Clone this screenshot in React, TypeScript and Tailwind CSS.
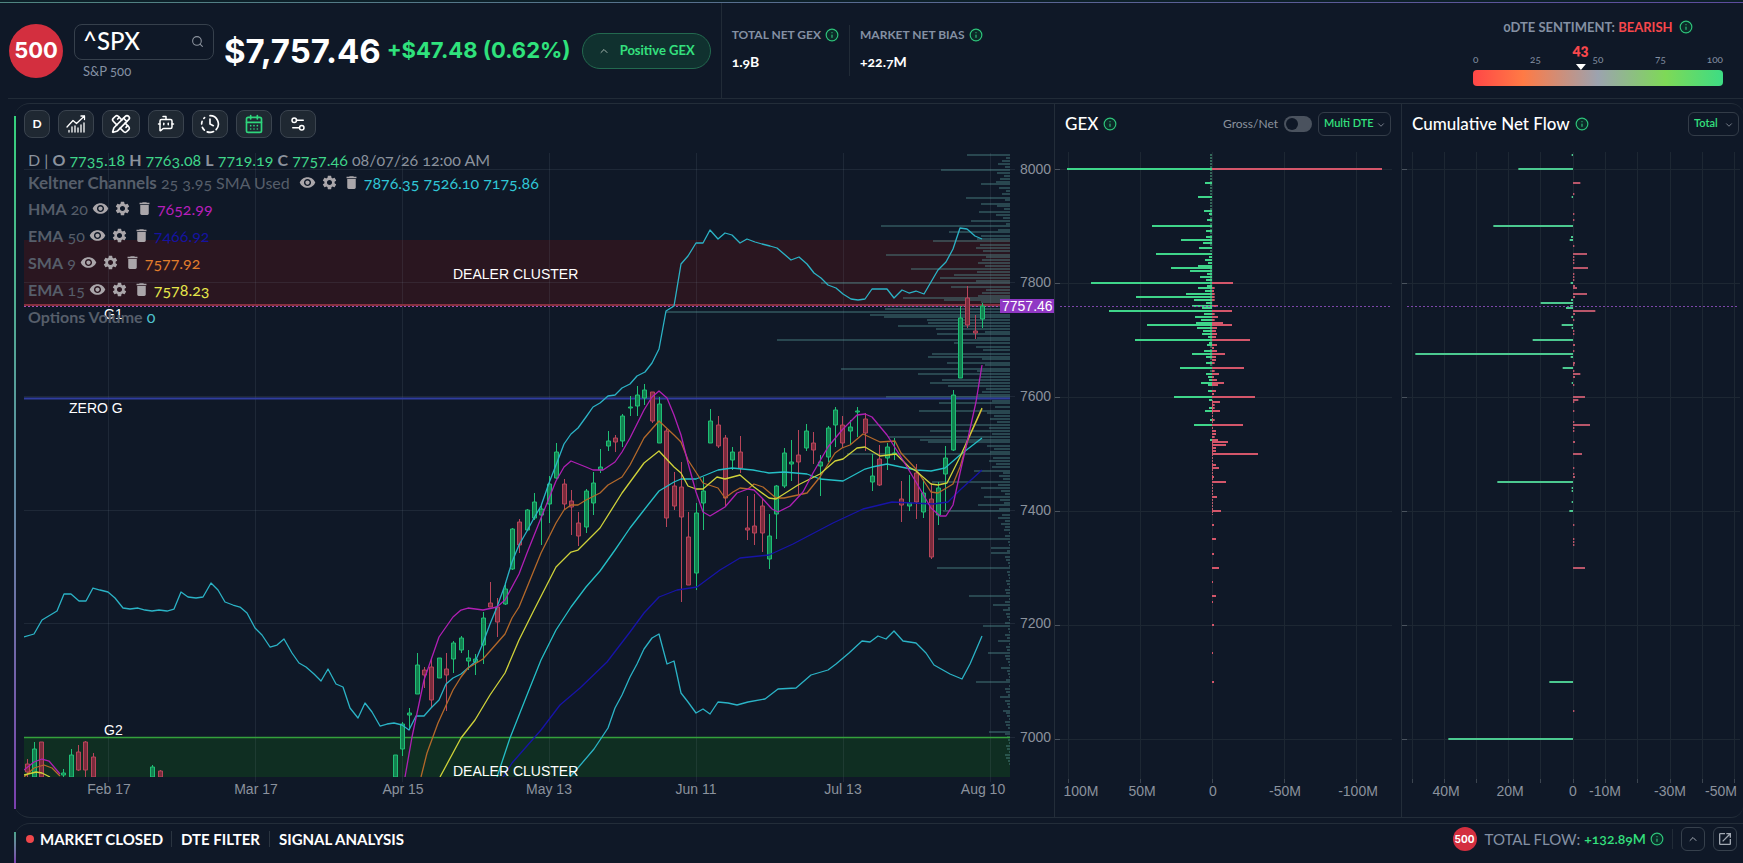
import { useState, type ReactNode } from 'react';
import {
  BotMessageSquare,
  CalendarDays,
  ChevronDown,
  ChevronUp,
  ClockFading,
  Info,
  PencilRuler,
  Search,
  Settings2,
} from 'lucide-react';
import { MdDelete, MdOpenInNew, MdSettings, MdVisibility } from 'react-icons/md';

// ---------- chart data ----------

// x, high, body top, body bottom, low, up(1) / down(0)
const candles = [
  [27, 759, 764, 772, 777, 0], [34, 742, 749, 777, 777, 1], [41, 742, 742, 777, 777, 0],
  [63, 769, 773, 775, 777, 1], [71, 749, 755, 777, 777, 1], [78, 745, 752, 770, 771, 0],
  [85, 741, 742, 770, 777, 0], [93, 753, 757, 777, 777, 0], [152, 765, 767, 777, 777, 1],
  [160, 770, 771, 777, 777, 0], [395, 755, 755, 777, 777, 1], [402, 722, 724, 749, 756, 1],
  [409, 708, 713, 715, 730, 1], [417, 653, 665, 694, 694, 1], [424, 667, 670, 675, 688, 0],
  [431, 659, 667, 700, 707, 0], [439, 658, 658, 678, 678, 1], [446, 653, 669, 675, 711, 0],
  [453, 641, 643, 659, 673, 1], [461, 636, 638, 650, 653, 1], [468, 650, 658, 661, 670, 1],
  [475, 654, 659, 662, 675, 1], [483, 612, 618, 645, 664, 1], [490, 582, 603, 607, 607, 0],
  [497, 598, 607, 622, 637, 0], [505, 582, 589, 604, 605, 1], [512, 528, 529, 569, 570, 1],
  [519, 519, 522, 545, 553, 0], [527, 509, 510, 530, 531, 1], [534, 493, 502, 518, 520, 1],
  [541, 504, 509, 515, 545, 1], [549, 476, 484, 504, 523, 1], [556, 443, 452, 478, 479, 1],
  [564, 479, 484, 504, 510, 0], [571, 490, 501, 507, 535, 0], [578, 512, 523, 536, 546, 0],
  [586, 489, 491, 527, 533, 1], [593, 472, 483, 503, 515, 1], [600, 449, 467, 470, 473, 1],
  [608, 431, 441, 446, 451, 1], [615, 435, 438, 442, 452, 0], [622, 414, 416, 441, 447, 1],
  [630, 396, 407, 408, 416, 1], [637, 386, 395, 406, 416, 1], [644, 384, 390, 398, 405, 1],
  [652, 392, 392, 421, 423, 0], [659, 397, 404, 443, 443, 1], [666, 429, 431, 518, 527, 0],
  [674, 472, 486, 506, 510, 0], [681, 462, 487, 517, 602, 0], [688, 512, 537, 585, 585, 0],
  [696, 503, 513, 573, 590, 1], [703, 477, 491, 503, 530, 1], [710, 409, 421, 443, 443, 1],
  [718, 416, 425, 446, 448, 0], [725, 435, 438, 498, 507, 0], [732, 447, 452, 460, 470, 1],
  [740, 436, 452, 468, 473, 0], [747, 496, 528, 530, 540, 0], [754, 494, 526, 533, 545, 0],
  [762, 499, 506, 533, 552, 0], [769, 514, 536, 559, 569, 1], [776, 485, 486, 514, 539, 1],
  [784, 448, 453, 486, 488, 1], [791, 440, 462, 464, 481, 1], [798, 430, 455, 462, 494, 0],
  [806, 424, 431, 448, 451, 1], [813, 432, 443, 450, 464, 0], [820, 455, 462, 466, 496, 1],
  [828, 426, 428, 457, 462, 1], [835, 407, 410, 425, 447, 1], [842, 416, 425, 443, 448, 0],
  [850, 420, 427, 431, 444, 1], [857, 407, 411, 412, 437, 1], [865, 413, 419, 433, 451, 0],
  [872, 454, 476, 482, 491, 1], [879, 445, 459, 485, 486, 0], [887, 443, 447, 458, 470, 1],
  [894, 438, 453, 454, 460, 1], [901, 481, 499, 505, 522, 0], [909, 475, 503, 506, 511, 1],
  [916, 464, 473, 502, 519, 0], [923, 479, 493, 512, 518, 1], [931, 483, 499, 557, 559, 0],
  [938, 482, 488, 515, 525, 1], [945, 446, 458, 474, 510, 1], [953, 390, 395, 450, 451, 1],
  [960, 306, 318, 378, 378, 1], [967, 286, 298, 325, 328, 0], [975, 315, 331, 333, 339, 0],
  [982, 303, 306, 319, 328, 1],
];

const lines = [
  // keltner upper
  { color: '#2bb3c6', points: '24,637 34,634 42,620 57,611 64,594 71,594 79,601 86,601 93,588 100,590 108,592 115,598 123,608 130,609 138,608 145,610 152,611 159,610 167,611 174,609 181,592 188,597 196,598 203,597 211,583 218,590 225,602 233,605 240,607 247,613 255,628 262,635 270,647 277,645 284,639 292,653 299,663 306,667 314,674 321,681 328,669 336,684 343,687 350,708 358,718 365,703 372,712 380,726 387,724 394,723 402,725 409,730 416,716 424,716 431,708 439,700 446,684 453,678 461,674 468,668 475,662 483,643 490,624 497,607 505,585 512,562 519,545 527,531 534,518 541,506 549,483 556,465 564,444 571,434 578,428 586,417 593,407 600,403 608,396 615,395 622,388 630,384 637,376 645,372 652,363 659,349 666,311 674,306 681,264 688,256 696,243 703,243 710,230 718,239 725,233 732,235 740,243 747,239 755,242 762,244 770,246 777,248 784,254 791,260 799,257 807,264 814,273 821,278 828,285 836,288 843,294 851,299 858,300 865,299 872,289 887,289 894,298 902,290 909,293 916,291 924,294 938,270 946,262 953,249 960,228 967,229 975,236 982,239' },
  // keltner middle
  { color: '#25bfc6', points: '497,777 510,738 527,695 541,660 556,630 571,607 586,587 600,571 615,550 630,528 644,510 659,491 674,482 681,479 696,479 718,470 732,468 753,470 769,473 784,472 807,474 820,479 843,481 865,469 872,467 887,464 901,467 916,470 931,471 945,468 960,455 982,438' },
  // keltner lower
  { color: '#2bb3c6', points: '570,777 577,769 594,749 608,728 615,708 622,695 630,677 637,664 644,649 652,638 659,634 667,664 674,661 681,693 688,702 696,713 703,709 710,714 718,702 728,703 737,705 748,702 765,699 778,689 796,688 811,675 828,670 836,664 849,653 862,641 870,642 878,636 886,639 894,631 903,641 916,643 926,653 934,665 950,674 962,679 970,664 982,636' },
  // ema 50
  { color: '#1714a8', points: '503,777 512,763 541,730 560,705 580,688 607,662 630,632 644,613 659,597 677,590 697,587 720,570 740,558 769,555 793,544 833,523 863,509 892,502 933,504 948,502 960,490 982,470' },
  // sma 9
  { color: '#b4692a', points: '421,777 427,753 438,723 453,690 461,677 468,668 483,659 505,634 512,618 519,607 541,553 556,523 564,510 571,505 578,505 586,500 600,493 608,485 622,477 630,465 644,438 659,421 674,435 681,442 688,460 703,483 718,488 725,498 733,492 740,488 748,489 754,484 763,487 776,498 784,498 798,495 807,493 820,477 835,453 842,448 850,445 863,434 880,442 895,441 901,453 916,469 931,492 938,493 953,484 960,467 968,440 982,409' },
  { color: '#b4692a', points: '24,777 34,768 44,765 52,768 60,776' },
  // ema 15
  { color: '#cfd23a', points: '440,777 461,738 475,720 490,695 505,673 519,640 534,610 556,567 571,552 578,550 586,542 600,528 622,493 644,463 659,451 674,467 681,473 688,486 696,489 703,489 717,477 725,479 740,475 754,487 769,498 776,499 798,485 820,474 835,461 843,459 857,448 865,447 880,456 896,454 909,467 916,471 931,484 938,485 947,483 960,457 982,408' },
  { color: '#cfd23a', points: '24,775 36,772 42,773 50,777' },
  // hma 20
  { color: '#b01fb4', points: '405,777 412,737 424,680 431,660 439,637 453,617 461,610 468,608 483,610 497,607 505,600 519,574 527,553 541,518 556,481 564,467 571,461 586,467 593,470 603,470 615,462 622,452 630,438 644,410 652,397 659,391 667,398 674,415 681,435 688,463 696,492 703,512 710,516 725,507 737,493 748,489 754,490 762,498 772,509 778,512 790,506 803,492 813,473 828,447 842,430 857,415 865,414 872,417 887,435 901,457 916,482 931,508 940,516 946,516 953,505 960,473 968,438 976,402 982,365' },
  { color: '#b01fb4', points: '24,770 34,762 42,759 49,761 60,774' },
];

// y, length of the options volume bar
const volume = [
  [154, 43], [169, 69], [183, 29], [197, 44], [203, 29], [211, 31], [220, 39], [225, 129], [231, 61],
  [240, 77], [254, 124], [268, 99], [274, 56], [277, 70], [282, 189], [286, 59], [297, 107], [299, 66],
  [305, 125], [308, 125], [311, 344], [314, 140], [316, 126], [319, 83], [322, 82], [325, 112],
  [328, 74], [333, 73], [339, 233], [342, 56], [353, 78], [356, 82], [362, 63], [368, 169], [373, 92],
  [379, 68], [382, 80], [385, 62], [396, 124], [402, 71], [410, 91], [424, 143], [430, 80], [436, 122],
  [439, 90], [441, 82], [453, 163], [470, 36], [481, 78], [487, 29], [496, 26], [504, 32], [510, 67],
  [538, 72], [547, 19], [552, 19], [567, 73], [595, 41], [604, 17], [609, 7], [625, 27], [640, 12],
  [652, 22], [667, 9], [681, 34], [696, 10], [710, 7], [731, 21],
];

const filler = Array.from({ length: 203 }, (_, i) => {
  const y = 157 + i * 3;
  const noise = (i * 37) % 11;
  let length = 1 + (noise % 5);
  if (y < 235) length = 4 + noise;
  else if (y < 400) length = 24 + noise;
  else if (y < 470) length = 13 + noise;
  else if (y < 530) length = 5 + (noise % 8);
  return [y, length];
});

// rows and lengths of the side charts are kept in thirds of a pixel
const gexPositive = [
  [237, 435], [279, 21], [321, 42], [363, 24], [372, 9], [390, 15], [408, 180], [423, 18], [441, 18],
  [450, 93], [459, 27], [474, 39], [492, 168], [501, 9], [510, 21], [519, 12], [528, 42], [534, 123],
  [543, 66], [552, 15], [561, 36], [570, 18], [579, 363], [588, 15], [594, 42], [603, 21], [612, 78],
  [621, 228], [630, 54], [639, 18], [648, 60], [654, 30], [663, 309], [672, 24], [681, 51], [690, 33],
  [699, 48], [705, 195], [714, 45], [723, 27], [732, 30], [741, 12], [750, 231], [759, 9], [765, 15],
  [783, 24], [792, 60], [801, 18], [819, 18], [834, 96], [852, 18], [861, 12], [870, 9], [879, 33],
  [885, 12], [903, 12], [921, 114], [930, 9], [954, 9], [963, 21], [990, 6], [1005, 54], [1050, 6],
];
const gexNegative = [
  [237, 510], [579, 63], [594, 8], [603, 6], [612, 8], [621, 8], [630, 8], [648, 18], [663, 60],
  [672, 8], [681, 18], [690, 8], [699, 33], [705, 60], [714, 15], [723, 12], [732, 15], [741, 12],
  [750, 114], [765, 15], [774, 6], [783, 15], [792, 39], [801, 12], [810, 12], [819, 8], [834, 96],
  [843, 8], [852, 21], [861, 6], [870, 15], [879, 36], [885, 18], [903, 12], [912, 6], [921, 129],
  [936, 24], [945, 8], [954, 8], [963, 24], [990, 8], [1005, 93], [1023, 12], [1032, 12], [1041, 8],
  [1050, 18], [1056, 48], [1065, 42], [1074, 12], [1083, 12], [1092, 138], [1125, 12], [1134, 21],
  [1160, 6], [1176, 42], [1221, 15], [1263, 27], [1305, 6], [1347, 12], [1392, 6], [1434, 21],
  [1476, 3], [1518, 12], [1536, 3], [1605, 6], [1689, 3], [1776, 6],
];
const flowPositive = [
  [194, 4], [237, 164], [321, 4], [408, 239], [441, 6], [450, 10], [579, 7], [630, 6], [639, 97], [648, 8],
  [654, 21], [681, 5], [705, 34], [714, 4], [750, 121], [792, 473], [801, 7], [834, 31], [879, 4],
  [1176, 227], [1194, 4], [1203, 4], [1236, 4], [1263, 11], [1776, 71], [1947, 374],
];
const flowNegative = [
  [279, 22], [312, 4], [372, 4], [390, 4], [468, 4], [492, 42], [501, 4], [510, 4], [519, 4], [534, 45],
  [552, 4], [561, 4], [570, 4], [588, 6], [594, 12], [612, 42], [621, 6], [663, 67], [672, 6],
  [690, 4], [723, 4], [732, 4], [765, 6], [783, 4], [819, 6], [825, 4], [843, 4], [852, 22], [861, 6],
  [885, 4], [921, 36], [930, 16], [936, 4], [963, 4], [996, 4], [1005, 51], [1014, 4], [1023, 4],
  [1056, 6], [1092, 27], [1134, 4], [1152, 4], [1161, 6], [1305, 4], [1347, 4], [1356, 4], [1365, 4],
  [1434, 36], [1862, 4],
];

const UP = '#1fbf75';
const DOWN = '#b8455a';
const GRID = '#1d2733';
const LABEL = '#8b929d';

const indicators = [
  { name: 'HMA', params: '20', value: '7652.99', color: 'text-[#b61fba]' },
  { name: 'EMA', params: '50', value: '7466.92', color: 'text-[#1613a0]' },
  { name: 'SMA', params: '9', value: '7577.92', color: 'text-[#e07d2c]' },
  { name: 'EMA', params: '15', value: '7578.23', color: 'text-[#e6e64a]' },
];

// ---------- small pieces ----------

function InfoIcon() {
  return <Info className="h-[14px] w-[14px] shrink-0 rounded-full bg-[#0c2a28] text-[#2fc27c]" />;
}

function SpxBadge({ className }: { className: string }) {
  return (
    <span className={`flex shrink-0 items-center justify-center rounded-full bg-[#d32f3f] font-[Inter] font-bold text-white ${className}`}>
      500
    </span>
  );
}

function ToolButton({ label, children, className = 'w-9' }: { label: string; children: ReactNode; className?: string }) {
  return (
    <button
      type="button"
      aria-label={label}
      className={`flex h-7 cursor-pointer items-center justify-center rounded-lg border border-[#3a434e] bg-[#1f2832] text-white ${className}`}
    >
      {children}
    </button>
  );
}

function IndicatorActions({ name }: { name: string }) {
  return (
    <span className="mx-1 flex items-center gap-[5px] text-[#aaa6aa]">
      <button type="button" aria-label={`Hide ${name}`} className="cursor-pointer"><MdVisibility className="h-[17px] w-[17px]" /></button>
      <button type="button" aria-label={`${name} settings`} className="cursor-pointer"><MdSettings className="h-[17px] w-[17px]" /></button>
      <button type="button" aria-label={`Remove ${name}`} className="cursor-pointer"><MdDelete className="h-[17px] w-[17px]" /></button>
    </span>
  );
}

function PickList({ label, value, options, className }: { label: string; value: string; options: string[]; className: string }) {
  return (
    <div className="relative">
      <select
        aria-label={label}
        defaultValue={value}
        className={`block h-6 cursor-pointer appearance-none rounded-md border border-[#333c48] bg-transparent pb-0.5 pl-[5px] text-[11px] leading-5 font-semibold text-[#34e07e] outline-none ${className}`}
      >
        {options.map((option) => <option key={option}>{option}</option>)}
      </select>
      <ChevronDown className="pointer-events-none absolute top-2 right-[5px] h-[10px] w-[10px] text-[#8b929d]" />
    </div>
  );
}

function Bars({ zero, rows, side, color }: { zero: number; rows: number[][]; side: 'left' | 'right'; color: string }) {
  return (
    <g fill={color}>
      {rows.map(([row, length]) => (
        <rect
          key={row}
          x={side === 'left' ? zero - length / 3 : zero}
          y={Math.round(90 + row / 3) - 1}
          width={length / 3}
          height="2"
        />
      ))}
    </g>
  );
}

function SideGrid({ left, right, xs }: { left: number; right: number; xs: number[] }) {
  return (
    <g stroke={GRID} shapeRendering="crispEdges">
      {xs.map((x) => <path key={x} d={`M${x} 152V783`} />)}
      {xs.map((x) => <path key={`t${x}`} d={`M${x} 779V783`} stroke="#3c4550" />)}
      {[169, 283, 397, 511, 625, 739].map((y) => (
        <g key={y}>
          <path d={`M${left} ${y}H${right}`} />
          <path d={`M${left} ${y}h5`} stroke="#4a535e" />
        </g>
      ))}
    </g>
  );
}

// ---------- charts ----------

function PriceChart() {
  const months: [string, number][] = [
    ['Feb 17', 109], ['Mar 17', 256], ['Apr 15', 403], ['May 13', 549], ['Jun 11', 696], ['Jul 13', 843], ['Aug 10', 983],
  ];
  const prices: [string, number][] = [
    ['8000', 169], ['7800', 282], ['7600', 396], ['7400', 510], ['7200', 623], ['7000', 737],
  ];
  return (
    <svg viewBox="14 146 1040 671" className="block w-full font-['Liberation_Sans',sans-serif] text-sm" role="img" aria-label="S&P 500 price chart">
      <defs>
        <clipPath id="plot"><rect x="24" y="146" width="986" height="631" /></clipPath>
      </defs>
      <rect x="24" y="240" width="986" height="65" fill="#2a1620" />
      <rect x="24" y="737" width="986" height="40" fill="#0f2e22" />
      <g stroke="#8899aa" strokeOpacity="0.12" shapeRendering="crispEdges">
        {[108, 255, 402, 549, 696, 843, 990].map((x) => <path key={x} d={`M${x}.5 153V782`} />)}
        {prices.map(([, y]) => <path key={y} d={`M24 ${y}.5H1015`} />)}
      </g>
      <g fill="#5a9a9c" fillOpacity="0.36" shapeRendering="crispEdges" clipPath="url(#plot)">
        {volume.map(([y, length]) => <rect key={y} x={1010 - length} y={y} width={length} height="2" />)}
        {filler
          .filter(([y]) => !volume.some(([v]) => Math.abs(v - y) < 2))
          .map(([y, length]) => <rect key={y} x={1010 - length} y={y} width={length} height="2" />)}
      </g>
      <path d="M24 398.5H1010" stroke="#303d9e" strokeWidth="2" />
      <path d="M24 737.5H1010" stroke="#35a13c" strokeWidth="1.5" />
      <path d="M24 305H1010" stroke="#86303f" strokeWidth="2" />
      <path d="M24 306.5H1000" stroke="#a94fb4" strokeDasharray="2 2" />

      <g fill="none" strokeWidth="1.3" strokeLinejoin="round" clipPath="url(#plot)">
        {candles.map(([x, high, top, bottom, low, up]) => (
          <g key={x} stroke={up ? UP : DOWN} strokeWidth="1">
            <path d={`M${x}.5 ${high}V${top}M${x}.5 ${bottom}V${low}`} />
            <rect x={x - 1.5} y={top} width="4" height={Math.max(bottom - top, 1)} fill={up ? '#12804f' : '#7a2b3c'} />
          </g>
        ))}
        {lines.map(({ color, points }) => <polyline key={points} points={points} stroke={color} />)}
      </g>

      <g fill={LABEL}>
        {months.map(([text, x]) => <text key={text} x={x} y="794" textAnchor="middle">{text}</text>)}
        {prices.map(([text, y]) => <text key={text} x="1020" y={y + 5}>{text}</text>)}
      </g>
      <g fill="#ffffff">
        <text x="453" y="279">DEALER CLUSTER</text>
        <text x="453" y="776">DEALER CLUSTER</text>
        <text x="69" y="413">ZERO G</text>
        <text x="104" y="319">G1</text>
        <text x="104" y="735">G2</text>
      </g>
      <rect x="1000" y="299" width="54" height="14" fill="#9038c4" />
      <text x="1002" y="311" fill="#ffffff">7757.46</text>
    </svg>
  );
}

function GexChart() {
  const ticks: [string, number][] = [['100M', 1081], ['50M', 1142], ['0', 1213], ['-50M', 1285], ['-100M', 1358]];
  return (
    <svg viewBox="1055 146 346 671" className="block w-full font-['Liberation_Sans',sans-serif] text-sm" role="img" aria-label="Gamma exposure by strike">
      <SideGrid left={1055} right={1392} xs={[1068, 1140, 1212, 1284, 1356]} />
      <path d="M1211 154V384" stroke="#58b98e" strokeDasharray="2 1" />
      <path d="M1212.5 400V515" stroke="#b85c6c" strokeDasharray="2 1" />
      <Bars zero={1212} rows={gexPositive} side="left" color="#3fd58a" />
      <Bars zero={1212} rows={gexNegative} side="right" color="#d4566a" />
      <path d="M1060 306.5H1391" stroke="#7b46a8" strokeDasharray="2 2" />
      <g fill={LABEL}>
        {ticks.map(([text, x]) => <text key={text} x={x} y="796" textAnchor="middle">{text}</text>)}
      </g>
    </svg>
  );
}

function FlowChart() {
  const ticks: [string, number][] = [['40M', 1446], ['20M', 1510], ['0', 1573], ['-10M', 1605], ['-30M', 1670], ['-50M', 1721]];
  return (
    <svg viewBox="1402 146 341 671" className="block w-full font-['Liberation_Sans',sans-serif] text-sm" role="img" aria-label="Cumulative net flow by strike">
      <SideGrid left={1402} right={1740} xs={[1412, 1444, 1476, 1508, 1540, 1573, 1605, 1637, 1670, 1702, 1734]} />
      <Bars zero={1573} rows={flowPositive} side="left" color="#4cc990" />
      <Bars zero={1573} rows={flowNegative} side="right" color="#b9566a" />
      <path d="M1407 306.5H1739" stroke="#7b46a8" strokeDasharray="2 2" />
      <g fill={LABEL}>
        {ticks.map(([text, x]) => <text key={text} x={x} y="796" textAnchor="middle">{text}</text>)}
      </g>
    </svg>
  );
}

// ---------- page sections ----------

function Header() {
  return (
    <header className="ml-2 flex h-24 items-stretch border-b border-[#212b37]">
      <div className="flex items-center pr-[10px] pl-px">
        <SpxBadge className="h-[54px] w-[54px] text-[22px]" />
        <div className="ml-[11px] flex w-[140px] flex-col gap-0.5 pt-0.5">
          <div className="relative">
            <input
              aria-label="Symbol"
              defaultValue="^SPX"
              className="block h-9 w-full rounded-lg border border-[#36404c] bg-transparent pr-8 pb-0.5 pl-2 text-2xl leading-7 font-medium text-white outline-none"
            />
            <Search className="pointer-events-none absolute top-[11px] right-[10px] h-[13px] w-[13px] text-[#8b929d]" />
          </div>
          <span className="pl-[9px] text-[13px] leading-[18px] text-[#8490a3]">S&P 500</span>
        </div>
        <span className="ml-[10px] font-[Inter] text-[33px] leading-9 font-bold text-white">$7,757.46</span>
        <span className="ml-1.5 font-[Inter] text-[22px] font-bold text-[#2fe27c]">+$47.48 (0.62%)</span>
        <button type="button" className="ml-[11px] flex h-9 w-[129px] cursor-pointer items-center justify-center gap-[10px] rounded-full border border-[#23694f] bg-[#10312f] text-[13px] font-bold text-[#34e07e]">
          <ChevronUp className="h-3 w-3 text-[#a4b5ae]" />
          Positive GEX
        </button>
      </div>
      <dl className="flex items-center border-l border-[#212b37] pl-[10px]">
        <div className="flex h-[51px] flex-col justify-between border-r border-[#212b37] pr-[10px]">
          <dt className="flex items-center gap-1 text-xs leading-5 font-bold text-[#8490a3]">TOTAL NET GEX <InfoIcon /></dt>
          <dd className="text-sm leading-7 font-bold text-white">1.9B</dd>
        </div>
        <div className="flex h-[51px] flex-col justify-between pl-[10px]">
          <dt className="flex items-center gap-1 text-xs leading-5 font-bold text-[#8490a3]">MARKET NET BIAS <InfoIcon /></dt>
          <dd className="text-sm leading-7 font-bold text-white">+22.7M</dd>
        </div>
      </dl>
      <div className="mr-5 ml-auto w-[250px] pt-[14px]">
        <p className="flex items-center justify-center gap-[6px] text-[13px] leading-5 font-bold text-[#8490a3]">
          <span>0DTE SENTIMENT: <span className="text-[#f8474c]">BEARISH</span></span>
          <InfoIcon />
        </p>
        <div className="relative mt-[14px]">
          <div className="flex h-[19px] items-start justify-between text-[10px] leading-4 text-[#8490a3]">
            <span className="flex w-0 justify-start">0</span>
            <span className="flex w-0 justify-center">25</span>
            <span className="flex w-0 justify-center">50</span>
            <span className="flex w-0 justify-center">75</span>
            <span className="flex w-0 justify-end">100</span>
          </div>
          <div className="h-4 rounded bg-[linear-gradient(90deg,#ff4747_0%,#ff7a45_20%,#9ca3af_50%,#7ed957_77%,#3ddc84_100%)]"></div>
          <div className="absolute -top-[14px] left-[43%] flex -translate-x-1/2 flex-col items-center">
            <span className="text-[15px] leading-6 font-extrabold text-[#f8474c]">43</span>
            <span className="mt-[3px] h-0 w-0 border-x-[5px] border-t-[6px] border-x-transparent border-t-white"></span>
          </div>
        </div>
      </div>
    </header>
  );
}

function Toolbar() {
  return (
    <div className="ml-[10px] flex h-7 gap-2">
      <ToolButton label="Daily interval" className="w-[26px] text-xs font-bold">D</ToolButton>
      <ToolButton label="Indicators">
        <svg viewBox="0 0 20 20" className="h-5 w-5" fill="none" stroke="currentColor" strokeWidth="1.3" strokeLinecap="round" strokeLinejoin="round" aria-hidden="true">
          <path d="M1 13 7 6.500l3.500 3L18.500 2M15 2h3.500v3.500M3 16.500V18M6 13v5M9 12v6M12 14v4M15 11v7M18 9v9" />
        </svg>
      </ToolButton>
      <ToolButton label="Drawing tools" className="w-[38px]"><PencilRuler className="h-5 w-5" /></ToolButton>
      <ToolButton label="Assistant"><BotMessageSquare className="h-[18px] w-[18px]" /></ToolButton>
      <ToolButton label="History"><ClockFading className="h-5 w-5" /></ToolButton>
      <ToolButton label="Calendar"><CalendarDays className="h-5 w-5 text-[#2fd67c]" /></ToolButton>
      <ToolButton label="Chart settings"><Settings2 className="h-[18px] w-[18px]" /></ToolButton>
    </div>
  );
}

function Legend() {
  return (
    <div className="absolute top-[46px] left-[14px] text-base whitespace-nowrap text-[#565e6a]">
      <p className="h-5 leading-5 text-[#8b929d]">
        D | <b>O</b> <span className="text-[#3fd58a]">7735.18</span> <b>H</b> <span className="text-[#3fd58a]">7763.08</span> <b>L</b>{' '}
        <span className="text-[#3fd58a]">7719.19</span> <b>C</b> <span className="text-[#3fd58a]">7757.46</span> 08/07/26 12:00 AM
      </p>
      <div className="flex h-[25px] items-center">
        <span className="mr-[5px]"><b className="text-[17px]">Keltner Channels</b> 25 3.95 SMA Used</span>
        <IndicatorActions name="Keltner Channels" />
        <span className="text-[#2fc6d6]">7876.35 7526.10 7175.86</span>
      </div>
      {indicators.map((item) => (
        <div key={item.value} className="flex h-[27px] items-center">
          <span><b>{item.name}</b> {item.params}</span>
          <IndicatorActions name={`${item.name} ${item.params}`} />
          <span className={item.color}>{item.value}</span>
        </div>
      ))}
      <p className="h-[27px] leading-[27px]"><b>Options Volume</b> <span className="text-[#4fc3cf]">0</span></p>
    </div>
  );
}

function Footer() {
  return (
    <footer className="relative mt-[5px] ml-[14px] flex h-10 items-center rounded-tl-2xl border-t border-[#232d39] pr-[6px] pb-[9px] text-[15px]">
      <span className="absolute top-2 bottom-0 left-0 w-0.5 bg-linear-to-b from-[#4aa58c] to-[#7a3fae]"></span>
      <span className="ml-3 h-2 w-2 rounded-full bg-[#f0474b]"></span>
      <nav className="ml-[6px] flex items-center divide-x divide-[#2a3440] font-bold text-white">
        <a href="#market" className="pr-2 leading-4">MARKET CLOSED</a>
        <a href="#dte" className="px-[9px] leading-4">DTE FILTER</a>
        <a href="#signals" className="px-[9px] leading-4">SIGNAL ANALYSIS</a>
      </nav>
      <div className="ml-auto flex items-center">
        <SpxBadge className="h-6 w-6 text-[10px]" />
        <span className="ml-2 text-[#8490a3]">TOTAL FLOW:</span>
        <span className="mx-1 text-sm font-semibold text-[#34e07e]">+132.89M</span>
        <InfoIcon />
        <span className="mx-2 h-5 w-px bg-[#212b37]"></span>
        <button type="button" aria-label="Expand" className="flex h-6 w-6 cursor-pointer items-center justify-center rounded-md border border-[#36404c] text-[#a2a9b3]">
          <ChevronUp className="h-3 w-3" />
        </button>
        <button type="button" aria-label="Open in new window" className="ml-2 flex h-6 w-6 cursor-pointer items-center justify-center rounded-md border border-[#36404c] text-[#a2a9b3]">
          <MdOpenInNew className="h-4 w-4" />
        </button>
      </div>
    </footer>
  );
}

export default function App() {
  const [netOnly, setNetOnly] = useState(false);

  return (
    <div className="min-h-screen overflow-hidden bg-[#0f1827] font-[Lato,sans-serif] oldstyle-nums">
      <div className="h-[3px] bg-[#0d2029] pt-0.5">
        <div className="h-px bg-linear-to-r from-[#4f8580] to-[#5d4c9e]"></div>
      </div>
      <Header />
      <main className="relative mt-1 ml-[14px] grid grid-cols-[1040fr_347fr_342fr] rounded-l-2xl rounded-r-xl border-y border-[#232d39]">
        <span className="absolute top-3 bottom-2 left-0 w-0.5 bg-linear-to-b from-[#34d17c] via-[#5b8f9f] to-[#7a3fae]"></span>
        <section className="relative min-w-0 pt-1.5">
          <Toolbar />
          <div className="mt-2"><PriceChart /></div>
          <Legend />
        </section>
        <section className="min-w-0 border-l border-[#232d39] pt-2">
          <div className="flex h-6 items-center px-[10px]">
            <h2 className="mr-[5px] text-[17px] leading-5 font-medium text-white">GEX</h2>
            <InfoIcon />
            <label htmlFor="net" className="mr-[6px] ml-auto text-xs text-[#8b929d]">Gross/Net</label>
            <input
              id="net"
              type="checkbox"
              checked={netOnly}
              onChange={() => setNetOnly((prev) => !prev)}
              className="mr-[6px] flex h-4 w-7 cursor-pointer appearance-none items-center rounded-full bg-[#4a525e] px-0.5 before:h-3 before:w-3 before:rounded-full before:bg-[#0f1827] checked:justify-end"
            />
            <PickList label="DTE" value="Multi DTE" options={['Multi DTE', '0 DTE']} className="w-[73px]" />
          </div>
          <div className="mt-[10px]"><GexChart /></div>
        </section>
        <section className="min-w-0 border-l border-[#232d39] pt-2">
          <div className="flex h-6 items-center pr-1 pl-[10px]">
            <h2 className="mr-[5px] text-[17px] leading-5 font-medium text-white">Cumulative Net Flow</h2>
            <InfoIcon />
            <div className="ml-auto">
              <PickList label="Flow" value="Total" options={['Total', 'Calls', 'Puts']} className="w-[51px]" />
            </div>
          </div>
          <div className="mt-[10px]"><FlowChart /></div>
        </section>
      </main>
      <Footer />
    </div>
  );
}
